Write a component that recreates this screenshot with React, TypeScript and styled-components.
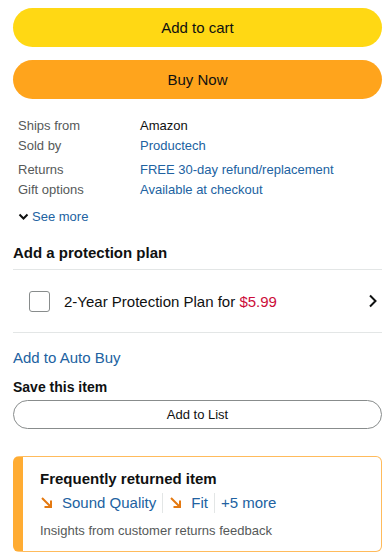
import styled, { createGlobalStyle } from "styled-components";

const GlobalStyle = createGlobalStyle`
  body {
    margin: 0;
    background: #ffffff;
    font-family: "Liberation Sans", Arial, sans-serif;
    color: #0f1111;
  }
`;

const details = [
  { label: "Ships from", value: "Amazon", link: false },
  { label: "Sold by", value: "Productech", link: true },
  { label: "Returns", value: "FREE 30-day refund/replacement", link: true },
  { label: "Gift options", value: "Available at checkout", link: true },
];

const App = () => {
  return (
    <>
      <GlobalStyle />
      <Page>
        <PillButton $bg="#ffd814">Add to cart</PillButton>
        <PillButton $bg="#ffa41c">Buy Now</PillButton>

        <DetailTable>
          {details.map((d) => (
            <DetailRow key={d.label}>
              <Label>{d.label}</Label>
              <Value $link={d.link}>{d.value}</Value>
            </DetailRow>
          ))}
        </DetailTable>

        <SeeMore>
          <svg width="11" height="8" viewBox="0 0 11 8">
            <path d="M1.5 1.5 L5.5 5.5 L9.5 1.5" stroke="#0f1111" strokeWidth="2" fill="none" />
          </svg>
          See more
        </SeeMore>

        <SectionTitle>Add a protection plan</SectionTitle>
        <PlanRow>
          <CheckBox />
          <PlanText>
            2-Year Protection Plan for <Price>$5.99</Price>
          </PlanText>
          <svg width="10" height="14" viewBox="0 0 10 14">
            <path d="M2 1.5 L7.5 7 L2 12.5" stroke="#0f1111" strokeWidth="2" fill="none" />
          </svg>
        </PlanRow>

        <AutoBuy>Add to Auto Buy</AutoBuy>
        <SaveTitle>Save this item</SaveTitle>
        <OutlineButton>Add to List</OutlineButton>

        <ReturnCard>
          <CardTitle>Frequently returned item</CardTitle>
          <ReasonRow>
            <Reason>
              <Arrow />
              Sound Quality
            </Reason>
            <Sep />
            <Reason>
              <Arrow />
              Fit
            </Reason>
            <Sep />
            <Reason>+5 more</Reason>
          </ReasonRow>
          <CardNote>Insights from customer returns feedback</CardNote>
        </ReturnCard>
      </Page>
    </>
  );
};

const Arrow = () => (
  <svg width="14" height="14" viewBox="0 0 14 14">
    <path d="M2 2 L11 11 M4.5 11 H11 V4.5" stroke="#e47911" strokeWidth="2" fill="none" />
  </svg>
);

export default App;

const Page = styled.div`
  width: 390px;
  height: 560px;
  box-sizing: border-box;
  padding: 8px 8px 0 13px;
  display: flex;
  flex-direction: column;
  overflow: hidden;
`;

const PillButton = styled.div<{ $bg: string }>`
  height: 39px;
  flex-shrink: 0;
  border-radius: 20px;
  background: ${(p) => p.$bg};
  display: flex;
  align-items: center;
  justify-content: center;
  font-size: 15px;
  color: #0f1111;
  margin-bottom: 13px;
`;

const DetailTable = styled.div`
  padding: 4px 0 0 5px;
  display: flex;
  flex-direction: column;
`;

const DetailRow = styled.div`
  display: flex;
  font-size: 13px;
  line-height: 20px;
  &:nth-child(3) {
    margin-top: 4px;
  }
`;

const Label = styled.span`
  width: 122px;
  color: #565959;
`;

const Value = styled.span<{ $link: boolean }>`
  color: ${(p) => (p.$link ? "#2162a1" : "#0f1111")};
`;

const SeeMore = styled.div`
  margin-top: 7px;
  padding-left: 5px;
  display: flex;
  align-items: center;
  gap: 3px;
  font-size: 13px;
  color: #2162a1;
  line-height: 20px;
`;

const SectionTitle = styled.div`
  margin-top: 16px;
  font-size: 15px;
  font-weight: 700;
  line-height: 20px;
  padding-bottom: 6px;
  border-bottom: 1px solid #e3e6e6;
`;

const PlanRow = styled.div`
  height: 62px;
  flex-shrink: 0;
  display: flex;
  align-items: center;
  padding: 0 4px 0 16px;
  border-bottom: 1px solid #e3e6e6;
`;

const CheckBox = styled.div`
  width: 21px;
  height: 21px;
  border: 1px solid #888c8c;
  border-radius: 3px;
  box-sizing: border-box;
`;

const PlanText = styled.div`
  flex: 1;
  margin-left: 14px;
  font-size: 15px;
  color: #0f1111;
`;

const Price = styled.span`
  color: #cc0c39;
`;

const AutoBuy = styled.div`
  margin-top: 15px;
  font-size: 15px;
  color: #2162a1;
  line-height: 20px;
`;

const SaveTitle = styled.div`
  margin-top: 9px;
  font-size: 14px;
  font-weight: 700;
  line-height: 20px;
`;

const OutlineButton = styled.div`
  margin-top: 3px;
  height: 29px;
  flex-shrink: 0;
  box-sizing: border-box;
  border: 1px solid #888c8c;
  border-radius: 15px;
  display: flex;
  align-items: center;
  justify-content: center;
  font-size: 13px;
`;

const ReturnCard = styled.div`
  margin-top: 27px;
  height: 96px;
  flex-shrink: 0;
  box-sizing: border-box;
  border: 1px solid #ffbb5c;
  border-left: 10px solid #ffac33;
  border-radius: 6px;
  padding: 12px 16px 0 17px;
  display: flex;
  flex-direction: column;
`;

const CardTitle = styled.div`
  font-size: 15px;
  font-weight: 700;
  line-height: 20px;
`;

const ReasonRow = styled.div`
  display: flex;
  align-items: center;
  margin-top: 4px;
  font-size: 15px;
  line-height: 20px;
  color: #2162a1;
`;

const Reason = styled.span`
  display: flex;
  align-items: center;
  gap: 8px;
`;

const Sep = styled.span`
  width: 1px;
  height: 20px;
  background: #e3e6e6;
  margin: 0 6px;
`;

const CardNote = styled.div`
  margin-top: 8px;
  font-size: 13px;
  line-height: 20px;
  color: #565959;
`;
